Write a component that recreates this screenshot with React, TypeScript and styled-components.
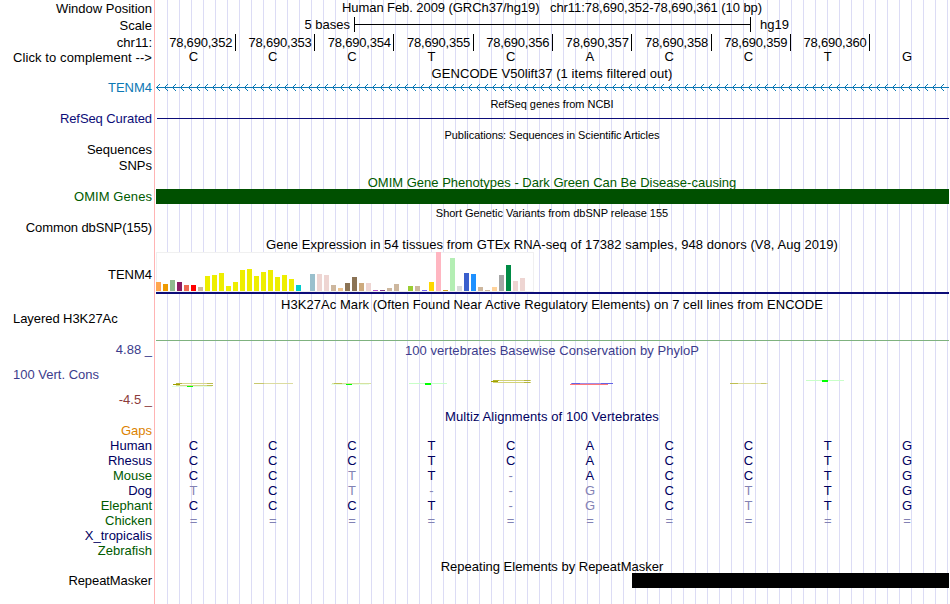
import styled, { createGlobalStyle } from "styled-components";

const GlobalStyle = createGlobalStyle`
  body {
    margin: 0;
    background-color: white;
  }
`;
const Browser = styled.div`
  width: 950px;
  height: 604px;
  display: flex;
  overflow: hidden;
  font-family: "Liberation Sans", Arial, sans-serif;
  font-size: 13px;
  line-height: 15px;
  color: black;
  white-space: pre;
`;
const Labels = styled.div`
  width: 152px;
  padding-right: 2px;
  display: flex;
  flex-direction: column;
`;
const Label = styled.div<{
  gap?: number;
  color?: string;
  left?: boolean;
  spacing?: number;
}>`
  height: 15px;
  margin-top: ${(props) => props.gap ?? 0}px;
  padding-left: 13px;
  display: flex;
  justify-content: ${(props) => (props.left ? "flex-start" : "flex-end")};
  letter-spacing: ${(props) => props.spacing ?? 0}px;
  color: ${(props) => props.color ?? "black"};
`;
const Tracks = styled.div`
  width: 793px;
  padding: 0 1px;
  border-left: 1px solid #ffb4b4;
  display: flex;
  flex-direction: column;
  background: linear-gradient(to right, #dcdcf5 1px, transparent 1px) 0 0 / 12px
    100%;
  background-origin: padding-box;
  background-clip: content-box;
`;
const Title = styled.div<{
  gap: number;
  color?: string;
  small?: boolean;
  spacing?: number;
}>`
  height: ${(props) => (props.small ? 12 : 14)}px;
  margin-top: ${(props) => props.gap}px;
  margin-left: -1px;
  font-size: ${(props) => (props.small ? 11 : 13)}px;
  line-height: ${(props) => (props.small ? 12 : 15)}px;
  letter-spacing: ${(props) => props.spacing ?? 0}px;
  text-align: center;
  color: ${(props) => props.color ?? "black"};
`;
const ScaleRow = styled.div`
  height: 15px;
  margin-top: 3px;
  display: flex;
`;
const ScaleText = styled.div`
  width: 194px;
  text-align: right;
`;
const ScaleBar = styled.div`
  width: 395px;
  margin: 0 9px 0 4px;
  border: solid black;
  border-width: 0 1px;
  display: flex;
  align-items: center;
  &::before {
    content: "";
    flex: 1;
    height: 1px;
    background-color: black;
  }
`;
const TickRow = styled.div`
  height: 14px;
  margin: 2px 0 0 0.5px;
  display: grid;
  grid-template-columns: repeat(9, 79.3px);
  line-height: 17px;
  letter-spacing: -0.2px;
`;
const Tick = styled.div`
  padding-right: 2.6px;
  border-right: 1px solid black;
  text-align: right;
`;
const BaseRow = styled.div<{ gap?: number }>`
  height: 15px;
  margin: ${(props) => props.gap ?? 0}px 0 0 -2.2px;
  display: grid;
  grid-template-columns: repeat(10, 79.3px);
  text-align: center;
`;
const Base = styled.span<{ color?: string }>`
  color: ${(props) => props.color ?? "black"};
`;
const Bar = styled.div<{
  gap?: number;
  height: number;
  color: string;
  start?: number;
}>`
  height: ${(props) => props.height}px;
  margin-top: ${(props) => props.gap ?? 0}px;
  margin-left: ${(props) => props.start ?? 0}px;
  background-color: ${(props) => props.color};
`;
const Drawing = styled.svg<{ gap: number }>`
  display: block;
  margin-top: ${(props) => props.gap}px;
  shape-rendering: crispEdges;
`;

const NAVY = "#00005f";
const GREEN = "#005a00";
const PHYLO = "#3c3c8c";
const YELLOW = "#eeee00";

const bases = "CCCTCACCTG";

const species = [
  { name: "Human", color: NAVY, seq: "CCCTCACCTG" },
  { name: "Rhesus", color: NAVY, seq: "CCCTCACCTG" },
  { name: "Mouse", color: GREEN, seq: "CCTT-ACCTG" },
  { name: "Dog", color: NAVY, seq: "TCT--GCTTG" },
  { name: "Elephant", color: GREEN, seq: "CCCT-GCTTG" },
  { name: "Chicken", color: GREEN, seq: "==========" },
  { name: "X_tropicalis", color: NAVY, seq: "" },
  { name: "Zebrafish", color: GREEN, seq: "" },
];

// one entry per GTEx tissue: [height, color]
const tissues: [number, string][] = [
  [9, "#ffa54f"],
  [7, "#ee9a00"],
  [11, "#8fbc8f"],
  [9, "#8b1c62"],
  [6, "#ee6a50"],
  [6, "#ff0000"],
  [4, "#cdb79e"],
  [15, YELLOW],
  [16, YELLOW],
  [18, YELLOW],
  [5, YELLOW],
  [9, YELLOW],
  [21, YELLOW],
  [22, YELLOW],
  [15, YELLOW],
  [19, YELLOW],
  [21, YELLOW],
  [14, YELLOW],
  [16, YELLOW],
  [12, YELLOW],
  [6, "#00cdcd"],
  [0, "#ee82ee"],
  [17, "#9ac0cd"],
  [17, "#eed5d2"],
  [16, "#eed5d2"],
  [6, "#cdb79e"],
  [3, "#eec591"],
  [8, "#8b7355"],
  [14, "#8b7355"],
  [8, "#cdaa7d"],
  [8, "#eed5d2"],
  [1, "#b452cd"],
  [1, "#7a378b"],
  [3, "#cdb79e"],
  [7, "#cdb79e"],
  [0, "#cdb79e"],
  [5, "#9acd32"],
  [5, "#cdb79e"],
  [1, "#7a67ee"],
  [9, "#ffd700"],
  [39, "#ffb6c1"],
  [1, "#cd9b1d"],
  [33, "#b4eeb4"],
  [5, "#d9d9d9"],
  [18, "#3a5fcd"],
  [17, "#1e90ff"],
  [4, "#cdb79e"],
  [1, "#cdb79e"],
  [4, "#ffd39b"],
  [16, "#a6a6a6"],
  [26, "#008b45"],
  [10, "#eed5d2"],
  [13, "#eed5d2"],
  [0, "#ff00ff"],
];

// squashed PhyloP letters: [x, y, width, height, color]
const phylo: [number, number, number, number, string][] = [
  [20, 5, 37, 1, "#d7d78c"],
  [20, 5, 6, 1, "#b4b43c"],
  [51, 5, 6, 1, "#bebe50"],
  [17, 6, 7, 1, "#a0a000"],
  [20, 7, 37, 1, "#d7d78c"],
  [51, 7, 6, 1, "#bebe50"],
  [16, 8, 40, 1, "#e1ffe1"],
  [31, 8, 6, 1, "#00ff00"],
  [98, 5, 39, 1, "#dcdca0"],
  [98, 5, 10, 1, "#c8c86e"],
  [176, 5, 39, 1, "#d7e1a0"],
  [178, 5, 8, 1, "#bebe50"],
  [175, 6, 38, 1, "#e6ffe6"],
  [190, 6, 6, 1, "#00ff00"],
  [253, 5, 38, 1, "#c8ffc8"],
  [269, 5, 6, 2, "#00ff00"],
  [337, 2, 38, 1, "#d2d278"],
  [337, 2, 6, 1, "#b4b428"],
  [368, 2, 6, 1, "#b4b43c"],
  [335, 3, 7, 1, "#a0a000"],
  [337, 4, 38, 1, "#d2d278"],
  [368, 4, 6, 1, "#b4b43c"],
  [415, 5, 42, 1, "#a08ce6"],
  [416, 5, 8, 1, "#6464e6"],
  [445, 5, 12, 1, "#6464e6"],
  [414, 6, 38, 1, "#ff7878"],
  [574, 5, 38, 1, "#dcdca0"],
  [574, 5, 8, 1, "#bebe50"],
  [605, 5, 5, 1, "#c8c86e"],
  [650, 2, 38, 1, "#c8ffc8"],
  [666, 2, 6, 2, "#00ff00"],
];

function Gencode() {
  return (
    <Drawing gap={4} width={793} height={7}>
      <defs>
        <pattern id="strand" width={8} height={7} patternUnits="userSpaceOnUse">
          <rect y={3} width={8} height={1} fill="#0c78b4" />
          <path
            d="M1 2h1v1h-1z M1 4h1v1h-1z M2 1h1v1h-1z M2 5h1v1h-1z M3 0h1v1h-1z M3 6h1v1h-1z"
            fill="#0c78b4"
          />
        </pattern>
      </defs>
      <rect width={793} height={7} fill="url(#strand)" />
    </Drawing>
  );
}

function Gtex() {
  return (
    <Drawing gap={1} width={793} height={40}>
      <rect width={378} height={40} fill="#f0f0f0" />
      <rect x={1} y={1} width={376} height={38} fill="white" />
      {tissues.map(([height, color], i) => (
        <rect
          key={i}
          x={i * 7}
          y={39 - height}
          width={5}
          height={height}
          fill={color}
        />
      ))}
    </Drawing>
  );
}

function App() {
  return (
    <Browser>
      <GlobalStyle />
      <Labels>
        <Label gap={1}>Window Position</Label>
        <Label gap={2}>Scale</Label>
        <Label gap={2}>chr11:</Label>
        <Label spacing={0.09}>{"Click to complement -->"}</Label>
        <Label gap={15} color="#0c78b4">
          TENM4
        </Label>
        <Label gap={16} color="#0c0c78" spacing={-0.08}>
          RefSeq Curated
        </Label>
        <Label gap={16}>Sequences</Label>
        <Label gap={1}>SNPs</Label>
        <Label gap={16} color={GREEN} spacing={0.07}>
          OMIM Genes
        </Label>
        <Label gap={16} spacing={-0.1}>
          Common dbSNP(155)
        </Label>
        <Label gap={32}>TENM4</Label>
        <Label gap={29} left spacing={-0.06}>
          Layered H3K27Ac
        </Label>
        <Label gap={16} color={PHYLO}>
          4.88 _
        </Label>
        <Label gap={10} color={PHYLO} left>
          100 Vert. Cons
        </Label>
        <Label gap={10} color="#8c3c3c">
          -4.5 _
        </Label>
        <Label gap={16} color="#dc8200">
          Gaps
        </Label>
        {species.map(({ name, color }) => (
          <Label key={name} color={color}>
            {name}
          </Label>
        ))}
        <Label gap={15} spacing={-0.08}>
          RepeatMasker
        </Label>
      </Labels>
      <Tracks>
        <Title gap={0} spacing={-0.07}>
          {"Human Feb. 2009 (GRCh37/hg19)   chr11:78,690,352-78,690,361 (10 bp)"}
        </Title>
        <ScaleRow>
          <ScaleText>5 bases</ScaleText>
          <ScaleBar />
          hg19
        </ScaleRow>
        <TickRow>
          {Array.from({ length: 9 }, (_, i) => (
            <Tick key={i}>{(78690352 + i).toLocaleString("en-US")}</Tick>
          ))}
        </TickRow>
        <BaseRow gap={1}>
          {bases.split("").map((base, i) => (
            <Base key={i}>{base}</Base>
          ))}
        </BaseRow>
        <Title gap={2} spacing={0.06}>
          GENCODE V50lift37 (1 items filtered out)
        </Title>
        <Gencode />
        <Title gap={7} small spacing={-0.04}>
          RefSeq genes from NCBI
        </Title>
        <Bar gap={8} height={1} start={1} color="#0c0c78" />
        <Title gap={10} small spacing={-0.06}>
          Publications: Sequences in Scientific Articles
        </Title>
        <Title gap={34} color={GREEN}>
          OMIM Gene Phenotypes - Dark Green Can Be Disease-causing
        </Title>
        <Bar height={15} color="#005000" />
        <Title gap={3} small spacing={-0.02}>
          Short Genetic Variants from dbSNP release 155
        </Title>
        <Title gap={18} spacing={0.05}>
          Gene Expression in 54 tissues from GTEx RNA-seq of 17382 samples, 948
          donors (V8, Aug 2019)
        </Title>
        <Gtex />
        <Bar height={2} color="#0c0c78" />
        <Title gap={3} spacing={0.05}>
          H3K27Ac Mark (Often Found Near Active Regulatory Elements) on 7 cell
          lines from ENCODE
        </Title>
        <Bar gap={29} height={1} color="#7fb27f" />
        <Title gap={2} color={PHYLO} spacing={0.04}>
          100 vertebrates Basewise Conservation by PhyloP
        </Title>
        <Drawing gap={21} width={793} height={10}>
          {phylo.map(([x, y, width, height, color], i) => (
            <rect
              key={i}
              x={x}
              y={y}
              width={width}
              height={height}
              fill={color}
            />
          ))}
        </Drawing>
        <Title gap={21} color={NAVY} spacing={0.08}>
          Multiz Alignments of 100 Vertebrates
        </Title>
        {species
          .filter(({ seq }) => seq)
          .map(({ name, seq }, row) => (
            <BaseRow key={name} gap={row === 0 ? 15 : 0}>
              {/* bases that differ from human are dimmed */}
              {seq.split("").map((base, i) => (
                <Base key={i} color={base === bases[i] ? NAVY : "#8282b4"}>
                  {base}
                </Base>
              ))}
            </BaseRow>
          ))}
        <Title gap={31}>Repeating Elements by RepeatMasker</Title>
        <Bar height={15} start={476} color="black" />
      </Tracks>
    </Browser>
  );
}

export default App;
